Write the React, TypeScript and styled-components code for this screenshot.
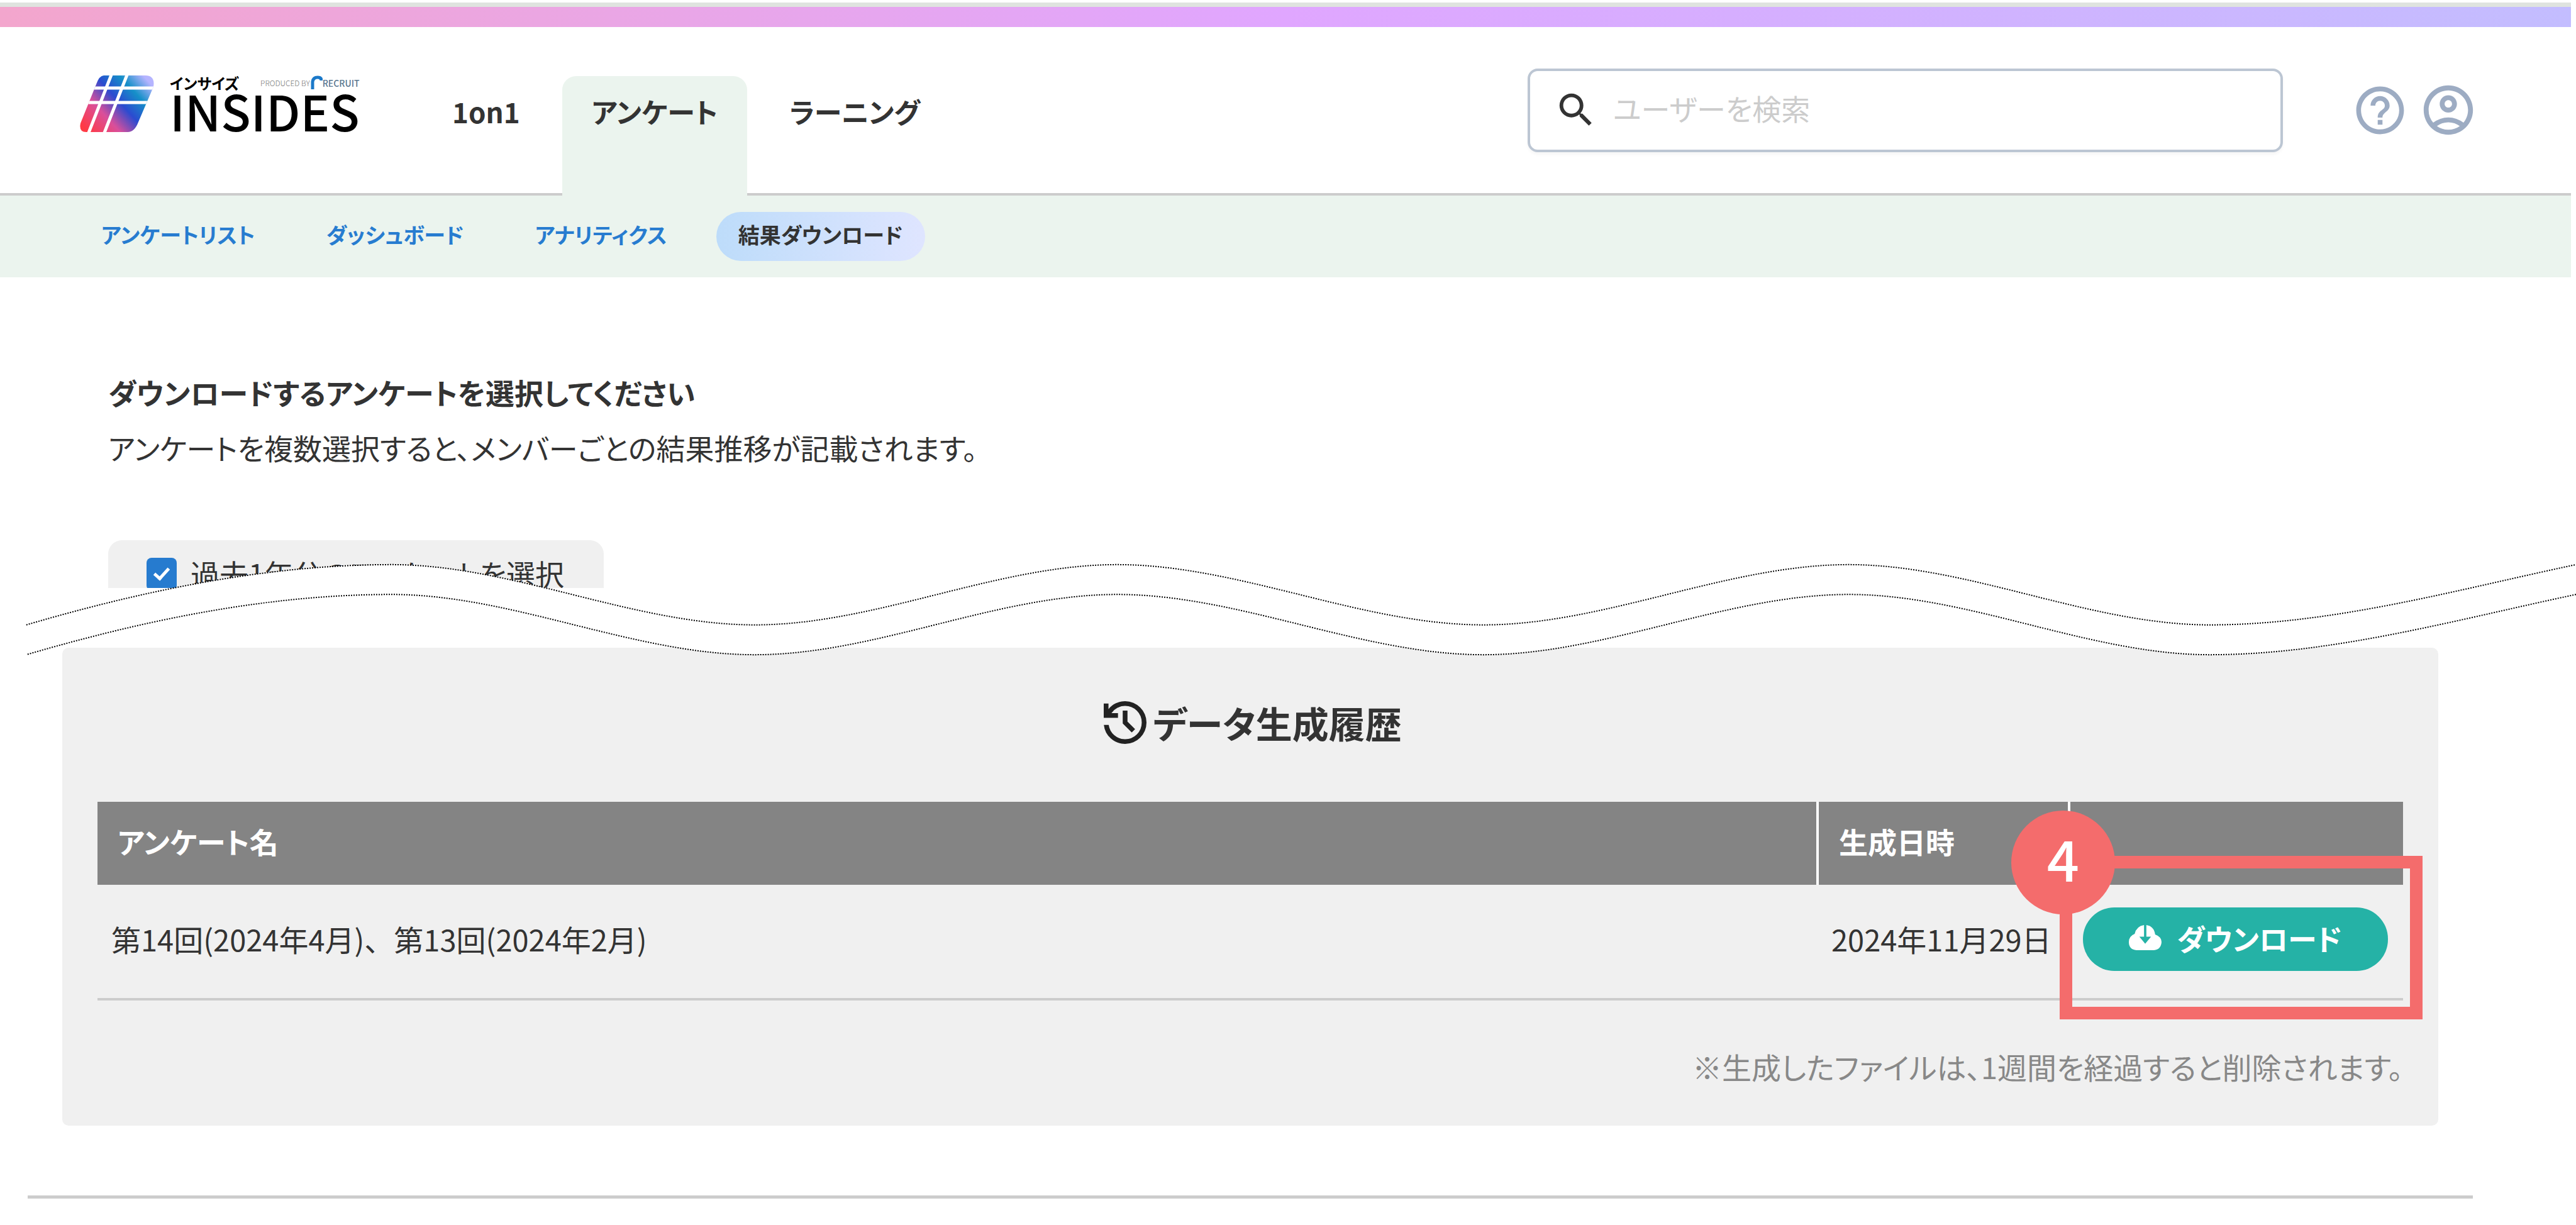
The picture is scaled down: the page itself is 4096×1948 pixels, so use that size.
import React from "react";
import styled, { createGlobalStyle, css } from "styled-components";
import { MdSearch, MdHelpOutline, MdOutlineAccountCircle } from "react-icons/md";

const GlobalStyle = createGlobalStyle`
  *, *::before, *::after { box-sizing: border-box; }
  body {
    margin: 0;
    background: #fff;
    color: #333;
    font-family: "Noto Sans CJK JP", "Noto Sans", sans-serif;
    font-size: 46px;
    line-height: 60px;
    font-feature-settings: "palt";
  }
  h1, h2, p { margin: 0; }
  button, input { font: inherit; font-feature-settings: inherit; }
`;

const Page = styled.div`
  position: relative;
  overflow: hidden;
`;

const TopStripe = styled.div`
  margin: 4px 8px 0 0;
  height: 39px;
  border-top: 7px solid #dfe3df;
  background: linear-gradient(90deg, #f3a6cd, #e0a6ff 50%, #c3bdff);
`;

const Header = styled.header`
  display: flex;
  align-items: center;
  min-height: 268px;
  margin-right: 8px;
  padding: 0 156px 0 127px;
  border-bottom: 4px solid #ccc;
`;

const Logo = styled.a`
  display: flex;
  flex-shrink: 0;
  gap: 25px;
  width: 440px;
  margin-bottom: 20px;
  color: #000;
  text-decoration: none;
`;

const LogoSymbol = styled.svg`
  flex-shrink: 0;
  width: 118px;
  height: 90px;
`;

const LogoText = styled.span`
  display: flex;
  flex-direction: column;
  flex: 1;
`;

const LogoTop = styled.span`
  display: flex;
  justify-content: space-between;
  font-size: 24px;
  line-height: 24px;
  font-weight: 700;
  white-space: nowrap;
`;

const Producer = styled.span`
  display: flex;
  align-items: center;
  font-size: 12px;
  font-weight: 300;
  color: #777;

  b {
    font-size: 14px;
    font-weight: 500;
    color: #5b7890;
  }
`;

const LogoName = styled.span`
  font-size: 78px;
  font-weight: 500;
  line-height: 62px;
`;

const Nav = styled.nav`
  display: flex;
  flex-shrink: 0;
  gap: 20px;
  align-self: flex-end;
  margin: 0 0 -4px 105px;
`;

const Tab = styled.a<{ $active?: boolean }>`
  padding: 26px 47px 104px;
  border-radius: 22px 22px 0 0;
  background: ${(p) => (p.$active ? "#ebf4ee" : "transparent")};
  color: #333;
  font-size: 44px;
  font-weight: 700;
  text-decoration: none;
`;

const SearchBox = styled.label`
  display: flex;
  align-items: center;
  gap: 24px;
  width: 1201px;
  height: 133px;
  margin-left: auto;
  padding: 0 38px;
  border: 4px solid #bcc6d3;
  border-radius: 16px;
  box-shadow: 0 4px 4px #f7f7f7;
`;

const SearchInput = styled.input`
  flex: 1;
  min-width: 0;
  padding: 0 0 8px;
  border: 0;
  outline: 0;
  background: transparent;
  color: #333;

  &::placeholder {
    color: #ccc;
    opacity: 1;
  }
`;

const Tools = styled.div`
  display: flex;
  align-items: center;
  gap: 16px;
  margin: 0 -8px 0 109px;
`;

const IconButton = styled.button`
  display: flex;
  padding: 0;
  border: 0;
  background: none;
  color: #9dacc3;
`;

const SubNav = styled.nav`
  display: flex;
  align-items: center;
  min-height: 130px;
  margin-right: 8px;
  padding: 0 126px;
  background: #ebf4ee;
`;

const SubLink = styled.a<{ $active?: boolean }>`
  padding: 6px 35px 12px;
  margin-right: 43px;
  border-radius: 39px;
  color: #277cd0;
  font-size: 34px;
  font-weight: 700;
  text-decoration: none;
  ${(p) =>
    p.$active &&
    css`
      background: linear-gradient(90deg, #bddcfa, #dfe5ff);
      color: #333;
    `}
`;

const Intro = styled.section`
  position: relative;
  height: 589px;
  padding: 152px 172px 0;
`;

const Heading = styled.h1`
  font-size: 46px;
  font-weight: 700;
  line-height: 60px;
`;

const Lead = styled.p`
  margin-top: 28px;
`;

const FilterClip = styled.div`
  height: 76px;
  margin-top: 118px;
  overflow: hidden;
`;

const FilterBox = styled.label`
  display: inline-flex;
  align-items: flex-start;
  gap: 22px;
  padding: 22px 63px 26px 61px;
  border-radius: 22px;
  background: #f0f0f0;
`;

const Checkbox = styled.input`
  display: grid;
  place-items: center;
  appearance: none;
  width: 48px;
  height: 52px;
  margin: 6px 0 0;
  border-radius: 8px;
  background: #267bcf;

  &::after {
    content: "";
    width: 14px;
    height: 24px;
    margin-top: -6px;
    border: solid #fff;
    border-width: 0 5px 5px 0;
    transform: rotate(42deg);
  }
`;

const TearLine = styled.svg`
  position: absolute;
  left: 0;
  bottom: -13px;
  z-index: 1;
  width: 100%;
  height: 147px;
`;

const Panel = styled.section`
  margin: 0 219px 0 99px;
  padding: 80px 56px 64px;
  border-radius: 10px;
  background: #f0f0f0;
`;

const PanelTitle = styled.h2`
  display: flex;
  align-items: center;
  justify-content: center;
  gap: 10px;
  margin-bottom: 87px;
  padding-left: 8px;
  font-size: 58px;
  font-weight: 700;
  line-height: 78px;
`;

const Table = styled.table`
  width: 100%;
  border-collapse: collapse;
  table-layout: fixed;
`;

const Th = styled.th<{ $width?: number }>`
  width: ${(p) => (p.$width ? `${p.$width}px` : "auto")};
  height: 132px;
  padding: 0 32px 8px;
  background: #848484;
  color: #fff;
  text-align: left;

  & + & {
    border-left: 4px solid #fff;
  }
`;

const Td = styled.td`
  position: relative;
  height: 182px;
  padding: 0 22px 8px;
  border-bottom: 4px solid #ccc;
  font-size: 47px;
  font-feature-settings: normal;
  white-space: nowrap;
`;

const DownloadButton = styled.button`
  display: flex;
  align-items: center;
  justify-content: center;
  gap: 24px;
  width: 485px;
  height: 101px;
  padding: 0 0 4px;
  border: 0;
  border-radius: 50px;
  background: #25b2a6;
  color: #fff;
  font-size: 46px;
  font-weight: 700;
  font-feature-settings: "palt";
`;

const Callout = styled.div`
  position: absolute;
  inset: -46px -31px -34px -15px;
  border: 20px solid #f46c6c;
  pointer-events: none;
`;

const CalloutBadge = styled.span`
  position: absolute;
  top: -92px;
  left: -97px;
  width: 165px;
  height: 165px;
  border-radius: 50%;
  background: #f46c6c;
  color: #fff;
  font-size: 90px;
  font-weight: 500;
  line-height: 148px;
  text-align: center;
`;

const Note = styled.p`
  margin-top: 75px;
  color: #888;
  font-size: 47px;
  text-align: right;
`;

const Rule = styled.hr`
  height: 5px;
  margin: 111px 164px 44px 44px;
  border: 0;
  background: #ccc;
`;

const LogoMark = () => (
  <LogoSymbol viewBox="0 0 118 90" aria-hidden="true">
    <defs>
      <linearGradient id="mark" gradientUnits="userSpaceOnUse" x1="12" y1="88" x2="104" y2="4">
        <stop offset="0" stopColor="#ff3a45" />
        <stop offset="0.3" stopColor="#d94f9b" />
        <stop offset="0.55" stopColor="#2b4bd0" />
        <stop offset="0.78" stopColor="#1590c8" />
        <stop offset="1" stopColor="#b5b4ff" />
      </linearGradient>
      <clipPath id="markShape">
        <path d="M38 0H104Q120 0 117 18L93 74Q87 90 76 90H10Q-2 90 1 76L26 14Q31 0 38 0Z" />
      </clipPath>
    </defs>
    <g clipPath="url(#markShape)">
      <rect width="118" height="90" fill="url(#mark)" />
      <path d="M0 20H118M0 43H118" stroke="#fff" strokeWidth="5" />
      <path d="M52 -6L12 96M77 -6L37 96" stroke="#fff" strokeWidth="5" />
    </g>
  </LogoSymbol>
);

const ProducerMark = () => (
  <svg width="20" height="24" viewBox="0 0 20 24" aria-hidden="true">
    <path d="M4 22V10Q5 3 12 3Q18 3 18 8" fill="none" stroke="#1b79c9" strokeWidth="5" />
  </svg>
);

const HistoryIcon = () => (
  <svg width="68" height="68" viewBox="120 -840 720 720" fill="#222" aria-hidden="true">
    <path d="M480-120q-138 0-240.5-91.5T122-440h82q14 104 92.5 172T480-200q117 0 198.5-81.5T760-480q0-117-81.5-198.5T480-760q-69 0-129 32t-101 88h110v80H120v-240h80v94q51-64 124.5-99T480-840q75 0 140.5 28.5t114 77q48.5 48.5 77 114T840-480q0 75-28.5 140.5t-77 114q-48.5 48.5-114 77T480-120Zm112-192L440-464v-216h80v184l128 128-56 56Z" />
  </svg>
);

const CloudIcon = () => (
  <svg width="52" height="40" viewBox="0 0 56 43" aria-hidden="true">
    <path
      d="M13 43Q0 42 0 29Q0 19 10 15Q13 2 26 0V20H18L28 32L38 20H30V0Q43 2 45 16Q56 20 56 29Q55 42 43 43Z"
      fill="#fff"
    />
  </svg>
);

const WAVE =
  "C250 1010 460 967 670 967C877 967 1085 1070 1292 1070C1499 1070 1705 967 1912 967C2121 967 2330 1070 2539 1070C2747 1070 2956 967 3164 967C3370 967 3576 1070 3782 1070C3992 1070 4204 1010 4409 967";
const WAVE_BACK =
  "C4204 1061 3992 1121 3782 1121C3576 1121 3370 1018 3164 1018C2956 1018 2747 1121 2539 1121C2330 1121 2121 1018 1912 1018C1705 1018 1499 1121 1292 1121C1085 1121 877 1018 670 1018C460 1018 250 1061 45 1121";

const Tear = () => (
  <TearLine viewBox="0 965 4409 158" preserveAspectRatio="none" aria-hidden="true">
    <path d={`M45 1070${WAVE}L4409 1018${WAVE_BACK}Z`} fill="#fff" />
    <g fill="none" stroke="#000" strokeWidth="2" strokeDasharray="2 2">
      <path vectorEffect="non-scaling-stroke" d={`M45 1070${WAVE}`} />
      <path vectorEffect="non-scaling-stroke" d={`M4409 1018${WAVE_BACK}`} />
    </g>
  </TearLine>
);

const tabs = ["1on1", "アンケート", "ラーニング"];
const subLinks = ["アンケートリスト", "ダッシュボード", "アナリティクス", "結果ダウンロード"];

export default function App() {
  return (
    <Page>
      <GlobalStyle />
      <TopStripe />
      <Header>
        <Logo href="#">
          <LogoMark />
          <LogoText>
            <LogoTop>
              インサイズ
              <Producer>
                PRODUCED BY
                <ProducerMark />
                <b>RECRUIT</b>
              </Producer>
            </LogoTop>
            <LogoName>INSIDES</LogoName>
          </LogoText>
        </Logo>
        <Nav>
          {tabs.map((t) => (
            <Tab key={t} href="#" $active={t === "アンケート"}>
              {t}
            </Tab>
          ))}
        </Nav>
        <SearchBox>
          <MdSearch size={70} color="#333" />
          <SearchInput type="search" placeholder="ユーザーを検索" aria-label="ユーザーを検索" />
        </SearchBox>
        <Tools>
          <IconButton type="button" aria-label="ヘルプ">
            <MdHelpOutline size={91} />
          </IconButton>
          <IconButton type="button" aria-label="アカウント">
            <MdOutlineAccountCircle size={94} />
          </IconButton>
        </Tools>
      </Header>
      <SubNav>
        {subLinks.map((t) => (
          <SubLink key={t} href="#" $active={t === "結果ダウンロード"}>
            {t}
          </SubLink>
        ))}
      </SubNav>
      <main>
        <Intro>
          <Heading>ダウンロードするアンケートを選択してください</Heading>
          <Lead>アンケートを複数選択すると、メンバーごとの結果推移が記載されます。</Lead>
          <FilterClip>
            <FilterBox>
              <Checkbox type="checkbox" defaultChecked />
              過去1年分のアンケートを選択
            </FilterBox>
          </FilterClip>
          <Tear />
        </Intro>
        <Panel>
          <PanelTitle>
            <HistoryIcon />
            データ生成履歴
          </PanelTitle>
          <Table>
            <thead>
              <tr>
                <Th>アンケート名</Th>
                <Th $width={400}>生成日時</Th>
                <Th $width={531} aria-label="ダウンロード" />
              </tr>
            </thead>
            <tbody>
              <tr>
                <Td>第14回(2024年4月)、第13回(2024年2月)</Td>
                <Td>2024年11月29日</Td>
                <Td>
                  <DownloadButton type="button">
                    <CloudIcon />
                    ダウンロード
                  </DownloadButton>
                  <Callout>
                    <CalloutBadge>4</CalloutBadge>
                  </Callout>
                </Td>
              </tr>
            </tbody>
          </Table>
          <Note>※生成したファイルは、1週間を経過すると削除されます。</Note>
        </Panel>
        <Rule />
      </main>
    </Page>
  );
}
